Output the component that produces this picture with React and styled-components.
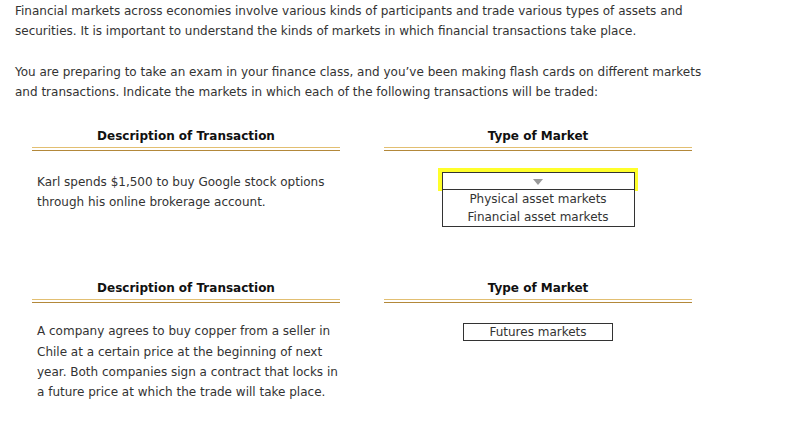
import React from "react";
import styled, { createGlobalStyle } from "styled-components";

const GlobalStyle = createGlobalStyle`
  body {
    margin: 0;
    background: #ffffff;
    font-family: "DejaVu Sans", Verdana, sans-serif;
    color: #333333;
  }
`;

const Page = styled.div`
  width: 807px;
  height: 446px;
  padding: 1px 15px 0;
  box-sizing: border-box;
  font-size: 12px;
  line-height: 20px;
`;

const Para = styled.p`
  margin: 0 0 20px;
  max-width: 692px;
  line-height: 20.3px;
`;

const Section = styled.div`
  display: grid;
  grid-template-columns: 308px 308px;
  column-gap: 44px;
  margin-left: 17px;
  margin-top: ${(p) => p.top || 0}px;
`;

const HeadCell = styled.div`
  text-align: center;
  font-weight: bold;
  color: #111111;
  padding-bottom: 1px;
  line-height: 20px;
  border-bottom: 4px double #b3883a;
`;

const Rule = styled.div`
  height: 1px;
  background: #e2bf72;
  margin-top: -4px;
`;

const Body = styled.div`
  padding: ${(p) => p.pad || "25px 5px 0"};
  display: flex;
  flex-direction: column;
  align-items: ${(p) => (p.center ? "center" : "stretch")};
`;

const Desc = styled.div`
  line-height: ${(p) => p.lh || 20}px;
  white-space: nowrap;
  color: #333333;
`;

const SelectWrap = styled.div`
  position: relative;
  width: 193px;
`;

const Glow = styled.div`
  position: absolute;
  left: -4px;
  right: -3px;
  top: -4px;
  height: 23px;
  background: #ffff2a;
`;

const Select = styled.div`
  position: relative;
  border: 1px solid #333333;
  background: #ffffff;
`;

const SelectHead = styled.div`
  height: 16px;
  border-bottom: 1px solid #333333;
  display: flex;
  justify-content: center;
  align-items: center;
`;

const Arrow = styled.span`
  width: 0;
  height: 0;
  border-left: 5px solid transparent;
  border-right: 5px solid transparent;
  border-top: 6px solid #999999;
  margin-top: 1px;
`;

const Option = styled.div`
  text-align: center;
  line-height: 18px;
  color: #333333;
`;

const AnswerBox = styled.div`
  width: 150px;
  height: 18px;
  border: 1px solid #333333;
  text-align: center;
  line-height: 16px;
  box-sizing: border-box;
`;

function Header({ children }) {
  return (
    <div>
      <HeadCell>{children}</HeadCell>
      <Rule />
    </div>
  );
}

export default function App() {
  return (
    <Page>
      <GlobalStyle />
      <Para>
        Financial markets across economies involve various kinds of participants and trade various types of assets and securities. It is important to understand the kinds of markets in which financial transactions take place.
      </Para>
      <Para>
        You are preparing to take an exam in your finance class, and you’ve been making flash cards on different markets and transactions. Indicate the markets in which each of the following transactions will be traded:
      </Para>
      <Section top={24}>
        <Header>Description of Transaction</Header>
        <Header>Type of Market</Header>
        <Body>
          <Desc lh={19.5}>
            Karl spends $1,500 to buy Google stock options
            <br />
            through his online brokerage account.
          </Desc>
        </Body>
        <Body center pad="24px 0 0">
          <SelectWrap>
            <Glow />
            <Select>
              <SelectHead>
                <Arrow />
              </SelectHead>
              <Option>Physical asset markets</Option>
              <Option>Financial asset markets</Option>
            </Select>
          </SelectWrap>
        </Body>
      </Section>
      <Section top={51}>
        <Header>Description of Transaction</Header>
        <Header>Type of Market</Header>
        <Body pad="21px 5px 0">
          <Desc lh={20.4}>
            A company agrees to buy copper from a seller in
            <br />
            Chile at a certain price at the beginning of next
            <br />
            year. Both companies sign a contract that locks in
            <br />
            a future price at which the trade will take place.
          </Desc>
        </Body>
        <Body center pad="23px 0 0">
          <AnswerBox>Futures markets</AnswerBox>
        </Body>
      </Section>
    </Page>
  );
}
